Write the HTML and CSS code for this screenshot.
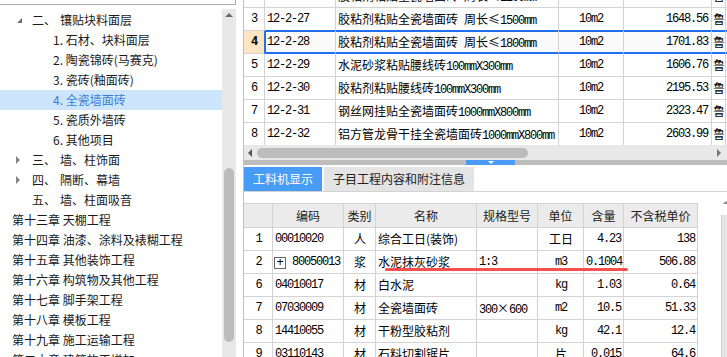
FILE: index.html
```html
<!DOCTYPE html>
<html lang="zh-CN">
<head>
<meta charset="utf-8">
<link rel="stylesheet" href="styles.css">
</head>
<body>
<div class="left">
  <div class="search"></div>
  <div class="tree-wrap">
    <ul class="tree">
      <li class="lv1"><i class="arr open"></i><span class="no">二、</span>镶贴块料面层</li>
      <li class="lv2">1. 石材、块料面层</li>
      <li class="lv2">2. 陶瓷锦砖(马赛克)</li>
      <li class="lv2">3. 瓷砖(釉面砖)</li>
      <li class="lv2 sel">4. 全瓷墙面砖</li>
      <li class="lv2">5. 瓷质外墙砖</li>
      <li class="lv2">6. 其他项目</li>
      <li class="lv1"><i class="arr shut"></i><span class="no">三、</span>墙、柱饰面</li>
      <li class="lv1"><i class="arr shut"></i><span class="no">四、</span>隔断、幕墙</li>
      <li class="lv1"><i class="arr"></i><span class="no">五、</span>墙、柱面吸音</li>
      <li class="ch">第十三章 天棚工程</li>
      <li class="ch">第十四章 油漆、涂料及裱糊工程</li>
      <li class="ch">第十五章 其他装饰工程</li>
      <li class="ch">第十六章 构筑物及其他工程</li>
      <li class="ch">第十七章 脚手架工程</li>
      <li class="ch">第十八章 模板工程</li>
      <li class="ch">第十九章 施工运输工程</li>
      <li class="ch">第二十章 建筑施工增加</li>
    </ul>
    <div class="vscroll"><i class="up"></i><div class="thumb"></div></div>
  </div>
</div>

<div class="right">
  <div class="grid-clip">
    <table class="grid tg">
      <colgroup><col class="w21"><col class="w71"><col class="w223"><col class="w65"><col class="w88"><col class="w14"><col class="w20"></colgroup>
      <tr><td class="c m">2</td><td class="m">12-2-26</td><td>胶粘剂粘贴全瓷墙面砖<span class="m"> </span>周长≤<span class="m">1200mm</span></td><td class="c m">10m2</td><td class="r m">1595.29</td><td class="lu">鲁</td><td></td></tr>
      <tr class="pre"><td class="c m">3</td><td class="m">12-2-27</td><td>胶粘剂粘贴全瓷墙面砖<span class="m"> </span>周长≤<span class="m">1500mm</span></td><td class="c m">10m2</td><td class="r m">1648.56</td><td class="lu">鲁</td><td></td></tr>
      <tr class="cur"><td class="c m rn">4</td><td class="m first">12-2-28</td><td>胶粘剂粘贴全瓷墙面砖<span class="m"> </span>周长≤<span class="m">1800mm</span></td><td class="c m">10m2</td><td class="r m">1701.83</td><td class="lu">鲁</td><td></td></tr>
      <tr><td class="c m">5</td><td class="m">12-2-29</td><td>水泥砂浆粘贴腰线砖<span class="m">100mmX300mm</span></td><td class="c m">10m2</td><td class="r m">1606.76</td><td class="lu">鲁</td><td></td></tr>
      <tr><td class="c m">6</td><td class="m">12-2-30</td><td>胶粘剂粘贴腰线砖<span class="m">100mmX300mm</span></td><td class="c m">10m2</td><td class="r m">2195.53</td><td class="lu">鲁</td><td></td></tr>
      <tr><td class="c m">7</td><td class="m">12-2-31</td><td>钢丝网挂贴全瓷墙面砖<span class="m">1000mmX800mm</span></td><td class="c m">10m2</td><td class="r m">2323.47</td><td class="lu">鲁</td><td></td></tr>
      <tr><td class="c m">8</td><td class="m">12-2-32</td><td>铝方管龙骨干挂全瓷墙面砖<span class="m">1000mmX800mm</span></td><td class="c m">10m2</td><td class="r m">2603.99</td><td class="lu">鲁</td><td></td></tr>
    </table>
  </div>
  <div class="hscroll"><i class="al"></i><div class="hthumb"></div><i class="ar"></i></div>
  <div class="split"><div class="grip"><i></i></div></div>
  <div class="tabs">
    <div class="tab on">工料机显示</div>
    <div class="tab">子目工程内容和附注信息</div>
  </div>
  <div class="lower">
    <table class="grid tb">
      <colgroup><col class="w29"><col class="w71"><col class="w32"><col class="w101"><col class="w61"><col class="w46"><col class="w40"><col class="w74"></colgroup>
      <tr><th></th><th>编码</th><th>类别</th><th>名称</th><th>规格型号</th><th>单位</th><th>含量</th><th>不含税单价</th></tr>
      <tr><td class="c m">1</td><td class="m">00010020</td><td class="c">人</td><td>综合工日(装饰)</td><td></td><td class="c">工日</td><td class="r m">4.23</td><td class="r m">138</td></tr>
      <tr><td class="c m">2</td><td class="m"><span class="plus">+</span>80050013</td><td class="c">浆</td><td>水泥抹灰砂浆</td><td class="m">1:3</td><td class="c m">m3</td><td class="r m">0.1004</td><td class="r m">506.88</td></tr>
      <tr><td class="c m">6</td><td class="m">04010017</td><td class="c">材</td><td>白水泥</td><td></td><td class="c m">kg</td><td class="r m">1.03</td><td class="r m">0.64</td></tr>
      <tr><td class="c m">7</td><td class="m">07030009</td><td class="c">材</td><td>全瓷墙面砖</td><td><span class="m">300</span>×<span class="m">600</span></td><td class="c m">m2</td><td class="r m">10.5</td><td class="r m">51.33</td></tr>
      <tr><td class="c m">8</td><td class="m">14410055</td><td class="c">材</td><td>干粉型胶粘剂</td><td></td><td class="c m">kg</td><td class="r m">42.1</td><td class="r m">12.4</td></tr>
      <tr><td class="c m">9</td><td class="m">03110143</td><td class="c">材</td><td>石料切割锯片</td><td></td><td class="c">片</td><td class="r m">0.015</td><td class="r m">64.6</td></tr>
    </table>
    <div class="vs2"><i class="up2"></i><div class="track"></div></div>
    <div class="mark"></div>
  </div>
</div>
</body>
</html>
```

FILE: styles.css
```css
* { box-sizing: border-box; }
html, body { margin: 0; padding: 0; }
body {
  width: 727px;
  height: 357px;
  overflow: hidden;
  display: flex;
  background: #fff;
  color: #1a1a1a;
  font-family: "Noto Sans CJK SC", "Noto Sans", sans-serif;
  font-size: 12px;
}

/* ---------- left tree ---------- */
.left {
  width: 236px;
  flex: none;
  display: flex;
  flex-direction: column;
}
.search {
  height: 5px;
  border-bottom: 1px solid #acacac;
  border-right: 1px solid #acacac;
}
.tree-wrap {
  flex: 1;
  min-height: 0;
  display: flex;
  margin-top: 4px;
}
.tree {
  flex: 1;
  list-style: none;
  margin: 0;
  padding: 1px 0 0;
  overflow: hidden;
}
.tree li {
  height: 20px;
  line-height: 20px;
  white-space: nowrap;
  display: flex;
  align-items: center;
}
.tree .sel { background: #cce5fb; color: #3a7dd6; }
.lv1 { padding-left: 16px; }
.lv2 { padding-left: 53px; }
.ch { padding-left: 12px; }
.arr { width: 16px; height: 20px; flex: none; display: flex; align-items: center; }
.arr.open::before {
  content: "";
  margin-left: 1px;
  width: 0; height: 0;
  border-left: 5px solid transparent;
  border-bottom: 5px solid #6e6e6e;
}
.arr.shut::before {
  content: "";
  width: 0; height: 0;
  border-top: 4px solid transparent;
  border-bottom: 4px solid transparent;
  border-left: 4px solid #858585;
}
.no { width: 28px; flex: none; }

.vscroll {
  width: 14px;
  flex: none;
  background: #e8e8e8;
  display: flex;
  flex-direction: column;
  align-items: center;
}
.vscroll .up {
  margin-top: 4px;
  width: 0; height: 0;
  border-left: 4px solid transparent;
  border-right: 4px solid transparent;
  border-bottom: 4px solid #6a6a6a;
}
.vscroll .thumb {
  margin-top: 151px;
  width: 10px;
  height: 174px;
  border-radius: 5px;
  background: #bcbcbc;
}

/* ---------- right side ---------- */
.right {
  flex: 1;
  min-width: 0;
  margin-left: 7px;
  border-left: 1px solid #c2c2c2;
  display: flex;
  flex-direction: column;
}
.grid-clip {
  height: 145px;
  overflow: hidden;
  flex: none;
}
.grid {
  border-collapse: separate;
  border-spacing: 0;
  table-layout: fixed;
  color: #000;
}
.grid td, .grid th {
  box-sizing: content-box;
  height: 22px;
  line-height: 14px;
  padding: 0 2px;
  vertical-align: middle;
  border-right: 1px solid #d3d3d3;
  border-bottom: 1px solid #d3d3d3;
  white-space: nowrap;
  overflow: hidden;
  font-weight: normal;
  text-align: left;
}
.grid .c { text-align: center; }
.grid .r { text-align: right; padding-right: 3px; }
.grid .lu { padding: 0 0 0 1px; overflow: visible; }
.m {
  font-family: "Liberation Mono", monospace;
  font-size: 12px;
  letter-spacing: -1.2px;
  line-height: 12px;
}

.tg { width: 502px; margin-top: -15px; }
.w21 { width: 21px; } .w71 { width: 71px; } .w223 { width: 223px; }
.w65 { width: 65px; } .w88 { width: 88px; } .w14 { width: 14px; } .w20 { width: 20px; }
.w29 { width: 29px; } .w32 { width: 32px; } .w101 { width: 101px; } .w61 { width: 61px; }
.w46 { width: 46px; } .w40 { width: 40px; } .w74 { width: 74px; }

.tg .pre td:not(:first-child) { border-bottom-color: #1f6fef; }
.tg .cur td { background: #fafafa; border-bottom-color: #1f6fef; box-shadow: inset 0 1px 0 #1f6fef, inset 0 -1px 0 #1f6fef; }
.tg .cur td.rn { background: #fde4c3; font-weight: bold; border-bottom-color: #d3d3d3; border-right-color: #1f6fef; box-shadow: none; }
.tg .cur td.first { box-shadow: inset 0 1px 0 #1f6fef, inset 0 -1px 0 #1f6fef, inset 1px 0 0 #1f6fef; }

.hscroll {
  height: 15px;
  flex: none;
  background: #e8e8e8;
  display: flex;
  align-items: center;
}
.al {
  margin-left: 4px;
  width: 0; height: 0;
  border-top: 4px solid transparent;
  border-bottom: 4px solid transparent;
  border-right: 4px solid #555;
}
.hthumb {
  margin-left: 5px;
  width: 271px;
  height: 10px;
  border-radius: 5px;
  background: #bcbcbc;
}
.ar {
  margin-left: auto;
  margin-right: 6px;
  width: 0; height: 0;
  border-top: 4px solid transparent;
  border-bottom: 4px solid transparent;
  border-left: 4px solid #777;
}
.split {
  height: 5px;
  flex: none;
  background: #bdbdbd;
}
.grip {
  margin-left: 222px;
  width: 49px;
  height: 5px;
  background: #4a9bf6;
  display: flex;
  justify-content: center;
  padding-top: 1px;
}
.grip i {
  width: 0; height: 0;
  border-left: 3px solid transparent;
  border-right: 3px solid transparent;
  border-top: 3px solid #fff;
}
.tabs {
  flex: none;
  margin-top: 2px;
  display: flex;
  gap: 2px;
  border-bottom: 1px solid #d2d2d2;
}
.tab {
  height: 24px;
  line-height: 24px;
  padding: 0 9px;
  background: #e4e4e4;
  color: #222;
}
.tab.on { background: #479cf6; color: #fff; }

.lower {
  position: relative;
  flex: 1;
  min-height: 0;
  display: flex;
  padding-top: 11px;
}
.tb { width: 454px; flex: none; align-self: flex-start; }
.tb th {
  height: 23px;
  border-top: 1px solid #d3d3d3;
  background: #ebebeb;
  text-align: center;
  color: #222;
}
.tb td { padding: 0 1px 0 2px; }
.tb td.r { padding-right: 2px; }
.plus {
  display: inline-block;
  width: 12px;
  height: 12px;
  line-height: 10px;
  border: 1px solid #666;
  text-align: center;
  font-size: 12px;
  letter-spacing: 0;
  margin: 0 6px 0 -1px;
  vertical-align: -1px;
}
.vs2 {
  margin-left: auto;
  width: 6px;
  flex: none;
  display: flex;
  flex-direction: column;
  align-items: flex-start;
}
.up2 {
  margin-top: -2px;
  margin-left: 2px;
  width: 0; height: 0;
  border-left: 3px solid transparent;
  border-right: 3px solid transparent;
  border-bottom: 3px solid #888;
}
.track {
  margin-top: 11px;
  width: 6px;
  flex: 1;
  background: #e6e6e6;
  border-left: 1px solid #cfcfcf;
}
.mark {
  position: absolute;
  left: 141px;
  top: 76px;
  width: 243px;
  height: 3px;
  border-radius: 2px;
  background: #f5504f;
}
```
